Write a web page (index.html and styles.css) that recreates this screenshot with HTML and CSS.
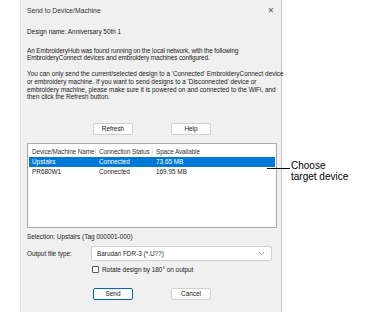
FILE: index.html
```html
<!DOCTYPE html>
<html>
<head>
<meta charset="utf-8">
<link rel="stylesheet" href="styles.css">
</head>
<body>
<div class="page">
  <div class="dialog">
    <div class="titlebar">
      <span class="title">Send to Device/Machine</span>
      <span class="close">✕</span>
    </div>
    <div class="body">
      <p class="design">Design name: Anniversary 50th 1</p>
      <p class="para1">An EmbroideryHub was found running on the local network, with the following<br>EmbroideryConnect devices and embroidery machines configured.</p>
      <p class="para2">You can only send the current/selected design to a 'Connected' EmbroideryConnect device<br>or embroidery machine. If you want to send designs to a 'Disconnected' device or<br>embroidery machine, please make sure it is powered on and connected to the WiFi, and<br>then click the Refresh button.</p>
      <div class="btnrow top">
        <button class="btn">Refresh</button>
        <button class="btn">Help</button>
      </div>
      <div class="list">
        <div class="row head">
          <span class="c1">Device/Machine Name</span>
          <span class="c2">Connection Status</span>
          <span class="c3">Space Available</span>
        </div>
        <div class="row sel">
          <span class="c1">Upstairs</span>
          <span class="c2">Connected</span>
          <span class="c3">73.65 MB</span>
        </div>
        <div class="row">
          <span class="c1">PR680W1</span>
          <span class="c2">Connected</span>
          <span class="c3">169.95 MB</span>
        </div>
      </div>
      <p class="selection">Selection: Upstairs (Tag 000001-000)</p>
      <div class="typerow">
        <span class="typelabel">Output file type:</span>
        <div class="combo">
          <span>Barudan FDR-3 (*.U??)</span>
          <svg class="chev" width="7" height="5" viewBox="0 0 7 5"><path d="M1 1.2 L3.5 3.6 L6 1.2" fill="none" stroke="#888" stroke-width="0.8"/></svg>
        </div>
      </div>
      <label class="check"><span class="box"></span>Rotate design by 180° on output</label>
      <div class="btnrow bottom">
        <button class="btn default">Send</button>
        <button class="btn">Cancel</button>
      </div>
    </div>
  </div>
  <div class="callout">
    <span class="line"></span>
    <span class="note">Choose<br>target device</span>
  </div>
</div>
</body>
</html>
```

FILE: styles.css
```css
html, body {
  margin: 0;
  padding: 0;
  background: #ffffff;
}
.page {
  display: flex;
  align-items: flex-start;
  width: 374px;
  height: 313px;
  overflow: hidden;
}
.dialog {
  margin-left: 20px;
  width: 262px;
  height: 312px;
  flex: none;
  background: #f0f0f0;
  border-left: 1px solid #e4e4e4;
  border-right: 1px solid #c8c8c8;
  font-family: "Liberation Sans", Arial, sans-serif;
  font-size: 6.4px;
  color: #1a1a1a;
  box-sizing: border-box;
  white-space: nowrap;
}
.titlebar {
  display: flex;
  justify-content: space-between;
  align-items: center;
  height: 20px;
  padding: 0 7px 0 6px;
  font-size: 6.8px;
  color: #333;
}
.close {
  font-family: "DejaVu Sans", sans-serif;
  font-size: 7.5px;
  color: #444;
}
.body {
  padding: 0 5px 0 6px;
}
p {
  margin: 0;
  line-height: 7.7px;
}
.design {
  margin-top: 8px;
}
.para1 {
  margin-top: 11px;
  letter-spacing: -0.1px;
}
.para2 {
  margin-top: 8px;
}
.btnrow {
  display: flex;
  gap: 38px;
  padding-left: 66px;
}
.btnrow.top {
  margin-top: 22px;
}
.btn {
  width: 40px;
  height: 12px;
  padding: 0;
  background: #fdfdfd;
  border: 1px solid #d0d0d0;
  border-radius: 2px;
  font-family: inherit;
  font-size: 6.4px;
  color: #1a1a1a;
  line-height: 10px;
}
.btn.default {
  border-color: #0067c0;
}
.list {
  margin-top: 8px;
  width: 250px;
  height: 85px;
  background: #ffffff;
  border: 1px solid #a8a8a8;
  box-sizing: border-box;
  padding: 2px 1px 0 1px;
}
.row {
  display: flex;
  height: 10px;
  align-items: center;
  padding-left: 3px;
}
.row.head {
  height: 11px;
  color: #333;
  letter-spacing: -0.1px;
}
.row.head span {
  border-right: 1px solid #e2e2e2;
}
.row.head .c3 {
  border-right: none;
}
.row.sel {
  background: #0078d7;
  color: #ffffff;
}
.c1 { width: 64px; flex: none; box-sizing: border-box; }
.c2 { width: 57px; flex: none; padding-left: 3px; box-sizing: border-box; }
.c3 { padding-left: 3px; }
.selection {
  margin-top: 5px;
}
.typerow {
  display: flex;
  align-items: center;
  margin-top: 5px;
}
.typelabel {
  width: 64px;
  flex: none;
}
.combo {
  display: flex;
  justify-content: space-between;
  align-items: center;
  width: 181px;
  height: 15px;
  background: #ffffff;
  border: 1px solid #cfcfcf;
  border-radius: 2px;
  box-sizing: border-box;
  padding: 0 6px 0 5px;
}
.check {
  display: flex;
  align-items: center;
  gap: 3px;
  margin-top: 5px;
  margin-left: 65px;
}
.box {
  width: 7px;
  height: 7px;
  border: 1px solid #555;
  border-radius: 1px;
  background: #fff;
  box-sizing: border-box;
}
.btnrow.bottom {
  margin-top: 15px;
}
.callout {
  display: flex;
  align-items: flex-start;
  margin-top: 160px;
  margin-left: -15px;
}
.line {
  display: block;
  width: 23px;
  height: 1px;
  background: #000;
  margin-top: 8px;
  flex: none;
}
.note {
  font-family: "Liberation Sans", Arial, sans-serif;
  font-size: 10px;
  line-height: 11px;
  color: #000;
  margin-left: 1px;
  white-space: nowrap;
}
```
